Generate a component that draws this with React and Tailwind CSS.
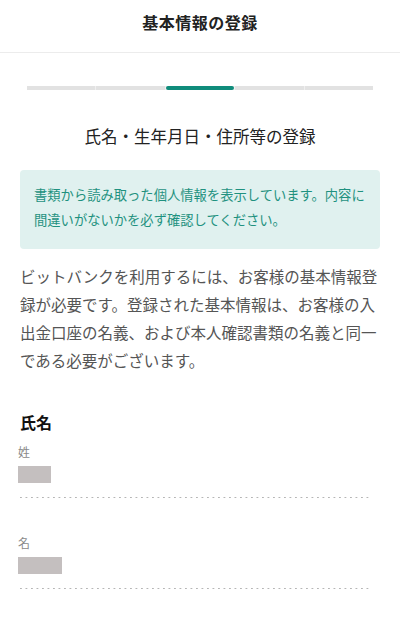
import React from "react";

const steps = [0, 1, 2, 3, 4];

const Field = ({ label, width }) => (
  <div>
    <div className="text-[12px] leading-[18px] text-[#8a8a8a]">{label}</div>
    <div className={`mt-[5px] h-[17px] bg-[#c4bfbf] ${width}`}></div>
    <div className="mt-[14px] ml-[2px] mr-[12px] h-px bg-[linear-gradient(to_right,#b5b5b5_2px,transparent_2px)] bg-[length:5.5px_1px]"></div>
  </div>
);

const App = () => {
  return (
    <div className="min-h-screen bg-white font-['Noto_Sans_CJK_JP','Noto_Sans',sans-serif] text-[#222]">
      <header className="flex h-[53px] items-center justify-center border-b border-[#ececec] pb-[8px]">
        <h1 className="text-[16px] font-bold tracking-[0.5px] text-[#222]">基本情報の登録</h1>
      </header>

      <div className="mx-[27px] mt-[33px] flex gap-px bg-[#f0f0f0]">
        {steps.map((i) => (
          <div
            key={i}
            className={i === 2 ? "h-[4px] flex-1 rounded-full bg-[#0f8c7b]" : "h-[4px] flex-1 bg-[#e2e2e2]"}
          ></div>
        ))}
      </div>

      <h2 className="mt-[34px] text-center text-[16.5px] leading-[24px] text-[#222]">
        氏名・生年月日・住所等の登録
      </h2>

      <div className="mx-[20px] mt-[22px] rounded-[4px] bg-[#e0f1ef] pl-[14px] pr-[6px] pt-[12px] pb-[17px] text-[13.3px] leading-[25px] text-[#1f917f]">
        書類から読み取った個人情報を表示しています。内容に間違いがないかを必ず確認してください。
      </div>

      <p className="mx-[20px] mt-[13px] text-[15.5px] leading-[28px] text-[#555]">
        ビットバンクを利用するには、お客様の基本情報登録が必要です。登録された基本情報は、お客様の入出金口座の名義、および本人確認書類の名義と同一である必要がございます。
      </p>

      <section className="mx-[18px] mt-[36px]">
        <h3 className="ml-[2px] text-[16px] font-bold leading-[24px] text-[#111]">氏名</h3>
        <div className="mt-[9px] flex flex-col gap-[36px]">
          <Field label="姓" width="w-[33px]" />
          <Field label="名" width="w-[44px]" />
        </div>
      </section>
    </div>
  );
};

export default App;
